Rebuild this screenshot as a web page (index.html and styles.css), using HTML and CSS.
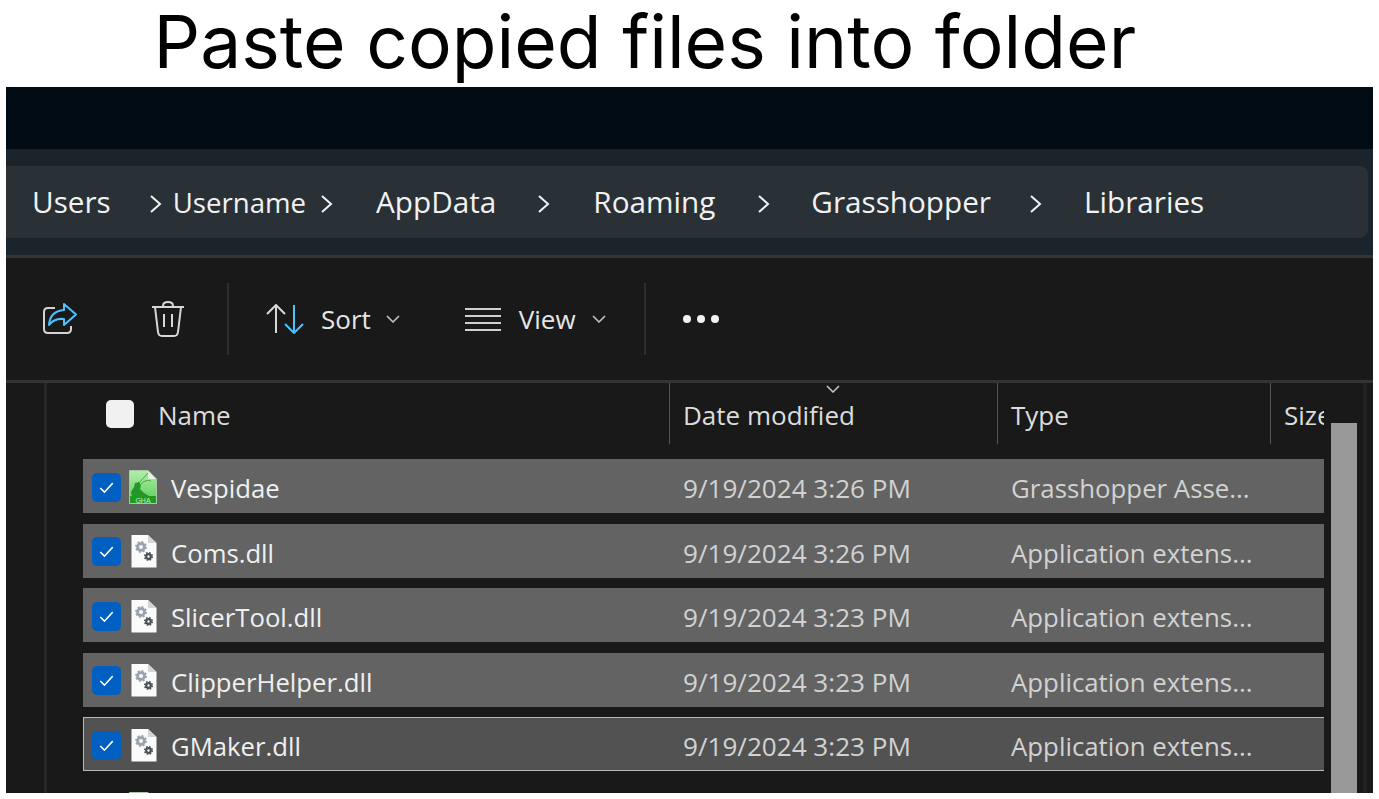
FILE: index.html
```html
<!DOCTYPE html>
<html lang="en">
<head>
<meta charset="utf-8">
<title>Paste copied files into folder</title>
<link rel="stylesheet" href="styles.css">
</head>
<body>
<svg class="defs" width="0" height="0" aria-hidden="true">
  <defs>
    <linearGradient id="gha-bg" x1="0" y1="0" x2="0" y2="1">
      <stop offset="0" stop-color="#b4eeac"/>
      <stop offset="0.75" stop-color="#6ed468"/>
    </linearGradient>
    <symbol id="dll" viewBox="0 0 28 34">
      <path d="M2.500 1H19L27.500 9V33.500H2.500Z" fill="#fbfbfb"/>
      <path d="M19 1V9H27.500Z" fill="#d4d4d4"/>
      <circle cx="12" cy="13" r="3.400" fill="none" stroke="#9aa2ac" stroke-width="2.800"/>
      <circle cx="12" cy="13" r="5" fill="none" stroke="#9aa2ac" stroke-width="1.800" stroke-dasharray="2 1.900"/>
      <circle cx="19.500" cy="22.500" r="2.300" fill="none" stroke="#4a4f55" stroke-width="2.200"/>
      <circle cx="19.500" cy="22.500" r="3.800" fill="none" stroke="#4a4f55" stroke-width="1.600" stroke-dasharray="1.600 1.400"/>
    </symbol>
    <symbol id="gha" viewBox="0 0 28 34">
      <path d="M0.500 0.500H19L27.500 9V33.500H0.500Z" fill="url(#gha-bg)" stroke="#a9c9a6" stroke-width="1"/>
      <path d="M19 1V9H27Z" fill="#e6f6e2"/>
      <path d="M1 26H27V33H1Z" fill="#1f9a22"/>
      <path d="M10 13L19 3M12 14Q17 9 22 11" fill="none" stroke="#2f9e2c" stroke-width="0.800"/>
      <path d="M2 22L5 17L6 13L10 12L12 15L11 19L15 23L20 26H6L3 26Z" fill="#24962a"/>
      <text x="14" y="32.500" class="gha-label">GHA</text>
    </symbol>
    <symbol id="tick" viewBox="0 0 28 28">
      <path d="M8 14.500L12 18.500L20 9.800" fill="none" stroke="#fff" stroke-width="1.500"/>
    </symbol>
    <symbol id="caret" viewBox="0 0 14 8">
      <path d="M1 1L7 7L13 1" fill="none" stroke="#c8c8c8" stroke-width="1.500"/>
    </symbol>
    <symbol id="crumb" viewBox="0 0 14 20">
      <path d="M2 2L11 10L2 18" fill="none" stroke="#f2f2f2" stroke-width="2"/>
    </symbol>
  </defs>
</svg>

<h1 class="headline">Paste copied files into folder</h1>

<main class="window">
  <div class="titlebar"></div>

  <nav class="addressbar">
    <div class="crumbs">
      <span class="crumb crumb-users">Users</span>
      <svg class="sep sep-a"><use href="#crumb"/></svg>
      <span class="crumb crumb-small">Username</span>
      <svg class="sep sep-b"><use href="#crumb"/></svg>
      <span class="crumb">AppData</span>
      <svg class="sep sep-c"><use href="#crumb"/></svg>
      <span class="crumb">Roaming</span>
      <svg class="sep sep-d"><use href="#crumb"/></svg>
      <span class="crumb">Grasshopper</span>
      <svg class="sep sep-e"><use href="#crumb"/></svg>
      <span class="crumb">Libraries</span>
    </div>
  </nav>

  <div class="toolbar">
    <svg class="tool tool-share" viewBox="0 0 36 34">
      <path d="M13 6H6Q2 6 2 10V27Q2 31 6 31H25Q29 31 29 27V24" fill="none" stroke="#d4d4d4" stroke-width="2"/>
      <path d="M22 2L34 12.500L22 23V17Q12 16 7 23Q8 9 22 8Z" fill="none" stroke="#4cc2ff" stroke-width="2" stroke-linejoin="round"/>
    </svg>
    <svg class="tool tool-trash" viewBox="0 0 34 36">
      <path d="M1 6H33M12 6V5Q12 1 17 1Q22 1 22 5V6M4 6L7 31Q7.500 35 11 35H23Q26.500 35 27 31L30 6M13 13V26M21 13V26" fill="none" stroke="#d8d8d8" stroke-width="2"/>
    </svg>
    <span class="divider divider-a"></span>
    <svg class="tool tool-sort" viewBox="0 0 38 30">
      <path d="M1 10L10 1L19 10M10 1V29" fill="none" stroke="#d8d8d8" stroke-width="2"/>
      <path d="M19 20L28 29L37 20M28 1V29" fill="none" stroke="#4cc2ff" stroke-width="2"/>
    </svg>
    <span class="tool-label">Sort</span>
    <svg class="caret"><use href="#caret"/></svg>
    <svg class="tool tool-view" viewBox="0 0 36 24">
      <path d="M0 2H36M0 9H36M0 16H36M0 23H36" fill="none" stroke="#d0d0d0" stroke-width="2"/>
    </svg>
    <span class="tool-label">View</span>
    <svg class="caret caret-view"><use href="#caret"/></svg>
    <span class="divider divider-b"></span>
    <div class="dots"><i></i><i></i><i></i></div>
  </div>

  <section class="explorer">
    <div class="gutter"></div>
    <div class="files">
      <div class="file-head">
        <span class="head-check"></span>
        <span class="head-cell head-name">Name</span>
        <span class="head-cell head-date">Date modified
          <svg class="sort-caret"><use href="#caret"/></svg>
        </span>
        <span class="head-cell head-type">Type</span>
        <span class="head-cell head-size">Size</span>
      </div>

      <div class="file">
        <span class="check"><svg><use href="#tick"/></svg></span>
        <svg class="file-icon"><use href="#gha"/></svg>
        <span class="file-name">Vespidae</span>
        <span class="file-date">9/19/2024 3:26 PM</span>
        <span class="file-type">Grasshopper Asse...</span>
      </div>
      <div class="file">
        <span class="check"><svg><use href="#tick"/></svg></span>
        <svg class="file-icon"><use href="#dll"/></svg>
        <span class="file-name">Coms.dll</span>
        <span class="file-date">9/19/2024 3:26 PM</span>
        <span class="file-type">Application extens...</span>
      </div>
      <div class="file">
        <span class="check"><svg><use href="#tick"/></svg></span>
        <svg class="file-icon"><use href="#dll"/></svg>
        <span class="file-name">SlicerTool.dll</span>
        <span class="file-date">9/19/2024 3:23 PM</span>
        <span class="file-type">Application extens...</span>
      </div>
      <div class="file">
        <span class="check"><svg><use href="#tick"/></svg></span>
        <svg class="file-icon"><use href="#dll"/></svg>
        <span class="file-name">ClipperHelper.dll</span>
        <span class="file-date">9/19/2024 3:23 PM</span>
        <span class="file-type">Application extens...</span>
      </div>
      <div class="file file-focus">
        <span class="check"><svg><use href="#tick"/></svg></span>
        <svg class="file-icon"><use href="#dll"/></svg>
        <span class="file-name">GMaker.dll</span>
        <span class="file-date">9/19/2024 3:23 PM</span>
        <span class="file-type">Application extens...</span>
      </div>
      <div class="file file-plain">
        <svg class="file-icon"><use href="#gha"/></svg>
      </div>
    </div>
    <div class="scroll-track"><div class="scroll-thumb"></div></div>
  </section>
</main>
</body>
</html>
```

FILE: styles.css
```css
* { box-sizing: border-box; }

html, body { margin: 0; padding: 0; background: #fff; }

body {
  height: 799px;
  overflow: hidden;
  font-family: "Open Sans", "Noto Sans", "Liberation Sans", sans-serif;
}

.defs { position: absolute; }

.gha-label {
  font-family: "Liberation Sans", sans-serif;
  font-size: 7px;
  fill: #c9eec6;
  text-anchor: middle;
}

.headline {
  margin: 0;
  height: 87px;
  padding: 0 0 0 153.500px;
  font-family: Inter, "Open Sans", sans-serif;
  font-size: 73.100px;
  line-height: 84px;
  font-weight: 400;
  color: #000;
  white-space: nowrap;
}

.window {
  width: 1367px;
  height: 706px;
  margin-left: 6px;
  background: #191919;
  overflow: hidden;
  display: flex;
  flex-direction: column;
}

.titlebar { height: 62px; flex: none; background: #020c14; }

.addressbar {
  height: 109px;
  flex: none;
  padding: 17px 5px 0 0;
  background: #1c242b;
  border-bottom: 3px solid #333638;
}

.crumbs {
  height: 72px;
  display: flex;
  align-items: center;
  padding-left: 26px;
  background: #293137;
  border-radius: 0 8px 8px 0;
}

.crumb {
  font-size: 29.700px;
  line-height: 72px;
  color: #f2f2f2;
  white-space: nowrap;
}

.crumb-small { font-size: 27.600px; }

.sep { width: 14px; height: 20px; flex: none; }
.sep-a { margin: 3px 10px 0 38px; }
.sep-b { margin: 3px 42px 0 14px; }
.sep-c { margin: 3px 42px 0 41px; }
.sep-d { margin: 3px 40px 0 42px; }
.sep-e { margin: 3px 41px 0 38px; }

.toolbar {
  height: 125px;
  flex: none;
  display: flex;
  align-items: center;
  background: #191919;
  border-bottom: 3px solid #333;
}

.tool { flex: none; }
.tool-share { width: 36px; height: 34px; margin-left: 36px; }
.tool-trash { width: 34px; height: 36px; margin-left: 73px; }
.tool-sort { width: 38px; height: 30px; margin-right: 17px; }
.tool-view { width: 36px; height: 24px; margin-left: 65px; margin-right: 18px; }

.tool-label { font-size: 26px; color: #e6e6e6; line-height: 30px; }

.caret { width: 14px; height: 8px; margin-left: 15px; flex: none; }
.caret-view { margin-left: 16px; }

.divider { width: 2px; height: 72px; background: #2e2e2e; flex: none; }
.divider-a { margin: 0 37px 0 42px; }
.divider-b { margin-left: 38px; }

.dots { display: flex; gap: 6px; margin-left: 37px; }
.dots i { display: block; width: 8px; height: 8px; border-radius: 50%; background: #f2f2f2; }

.explorer { flex: 1; min-height: 0; display: flex; }

.gutter {
  width: 41px;
  flex: none;
  border-right: 3px solid #262626;
}

.files {
  width: 1277px;
  flex: none;
  padding-left: 36px;
  overflow: hidden;
}

.file-head {
  width: 1241px;
  height: 76px;
  display: grid;
  grid-template-columns: 76px 510px 328px 273px 1fr;
  align-items: start;
  overflow: hidden;
}

.head-check {
  width: 28px;
  height: 28px;
  margin: 17px 0 0 23px;
  background: #f1f1f1;
  border-radius: 5px;
}

.head-cell {
  position: relative;
  height: 61px;
  font-size: 26px;
  line-height: 64px;
  color: #dcdcdc;
  white-space: nowrap;
}

.head-name { margin-left: -1px; }
.head-date, .head-type, .head-size { padding-left: 13px; border-left: 1px solid #555; }

.sort-caret {
  position: absolute;
  left: 156px;
  top: 2px;
  width: 14px;
  height: 8px;
}

.file {
  width: 1241px;
  height: 54px;
  margin-bottom: 10.5px;
  display: grid;
  grid-template-columns: 9px 29px 8px 28px 14px 512px 328px 1fr;
  grid-template-rows: 54px;
  grid-template-areas: ". check . icon . name date type";
  align-items: center;
  background: #636363;
  font-size: 26px;
  white-space: nowrap;
}

.file-focus {
  background: #525252;
  box-shadow: inset 1px 1px 0 #b8b8b8, inset 0 -1px 0 #b8b8b8;
}

.file-plain { background: transparent; }

.check {
  grid-area: check;
  width: 29px;
  height: 29px;
  margin-top: 2px;
  display: block;
  background: #005fc0;
  border-radius: 5px;
}

.check svg { display: block; width: 29px; height: 29px; }

.file-icon { grid-area: icon; width: 28px; height: 34px; margin-top: 1px; }

.file-date, .file-type { padding-top: 4px; }
.file-name { padding-top: 5px; }

.file-name { grid-area: name; color: #f0f0f0; font-size: 25.700px; }
.file-date { grid-area: date; color: #d2d2d2; font-size: 26.100px; }
.file-type { grid-area: type; color: #d2d2d2; font-size: 25.800px; }

.scroll-track {
  width: 36px;
  flex: none;
  margin-left: 7px;
  padding-top: 40px;
  padding-right: 6px;
  border-right: 4px solid #222;
}

.scroll-thumb { height: 100%; background: #999; }
```
